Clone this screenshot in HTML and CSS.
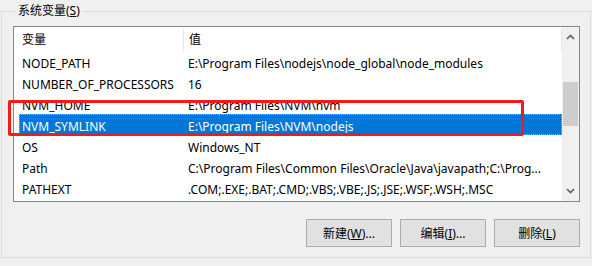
FILE: index.html
```html
<!DOCTYPE html>
<html lang="zh-CN">
<head>
    <meta charset="UTF-8">
    <title>系统变量</title>
    <link rel="stylesheet" href="styles.css">
</head>
<body>
    <fieldset class="group">
        <legend>系统变量(<u>S</u>)</legend>

        <div class="list">
            <div class="list-main">
                <div class="list-head">
                    <div class="head-name">变量</div>
                    <div class="head-value">值</div>
                </div>
                <div class="row"><span class="name">NODE_PATH</span><span class="value">E:\Program Files\nodejs\node_global\node_modules</span></div>
                <div class="row"><span class="name">NUMBER_OF_PROCESSORS</span><span class="value">16</span></div>
                <div class="row"><span class="name">NVM_HOME</span><span class="value">E:\Program Files\NVM\nvm</span></div>
                <div class="row selected"><span class="name">NVM_SYMLINK</span><span class="value">E:\Program Files\NVM\nodejs</span></div>
                <div class="row"><span class="name">OS</span><span class="value">Windows_NT</span></div>
                <div class="row"><span class="name">Path</span><span class="value">C:\Program Files\Common Files\Oracle\Java\javapath;C:\Prog...</span></div>
                <div class="row"><span class="name">PATHEXT</span><span class="value">.COM;.EXE;.BAT;.CMD;.VBS;.VBE;.JS;.JSE;.WSF;.WSH;.MSC</span></div>
            </div>
            <div class="scrollbar">
                <svg class="arrow" width="9" height="6" viewBox="0 0 9 6"><path d="M1 5 L4.5 1.5 L8 5" fill="none" stroke="#606060" stroke-width="1.6"/></svg>
                <div class="track"><div class="thumb"></div></div>
                <svg class="arrow" width="9" height="6" viewBox="0 0 9 6"><path d="M1 1 L4.5 4.5 L8 1" fill="none" stroke="#606060" stroke-width="1.6"/></svg>
            </div>
        </div>

        <div class="buttons">
            <button>新建(<u>W</u>)...</button>
            <button>编辑(<u>I</u>)...</button>
            <button>删除(<u>L</u>)</button>
        </div>

        <!-- annotation box -->
        <div class="mark"></div>
    </fieldset>
</body>
</html>
```

FILE: styles.css
```css
body {
    margin: 0;
    width: 592px;
    height: 266px;
    background-color: #f0f0f0;
    font-family: "Noto Sans", "Noto Sans CJK SC", sans-serif;
    font-size: 12px;
    color: #000;
    overflow: hidden;
}
.group {
    position: relative;
    margin: 4px 1px 0 1px;
    padding: 0 10px 0 11px;
    width: 567px;
    height: 252px;
    border: 1px solid #dcdcdc;
    box-sizing: content-box;
}
.group legend {
    margin-left: 3px;
    padding: 0 2px 0 2px;
    line-height: 14px;
}
.list {
    display: flex;
    margin-top: 8px;
    height: 174px;
    background-color: #fff;
    border: 1px solid #828790;
}
.list-main {
    flex: 1;
}
.list-head {
    display: flex;
    height: 24px;
    box-sizing: border-box;
    padding-top: 2px;
    line-height: 21px;
}
.head-name {
    width: 161px;
    padding-left: 8px;
    border-right: 1px solid #e5e5e5;
}
.head-value {
    flex: 1;
    padding-left: 5px;
    border-right: 1px solid #e5e5e5;
}
.row {
    display: flex;
    height: 21px;
    box-sizing: border-box;
    padding-top: 4px;
    line-height: 17px;
    margin-left: 5px;
    white-space: nowrap;
}
.row .name {
    width: 165px;
    padding-left: 3px;
    box-sizing: border-box;
}
.row .value {
    padding-left: 4px;
}
.row.selected {
    background-color: #0078d7;
    color: #fff;
    outline: 1px dotted #f3a53a;
    outline-offset: -1px;
}
.scrollbar {
    width: 17px;
    display: flex;
    flex-direction: column;
    align-items: center;
    background-color: #f0f0f0;
}
.arrow {
    margin: 7px 0;
}
.track {
    flex: 1;
    width: 100%;
}
.thumb {
    margin: 35px 1px 0 1px;
    height: 44px;
    background-color: #cdcdcd;
}
.buttons {
    display: flex;
    justify-content: flex-end;
    gap: 8px;
    margin-top: 17px;
}
.buttons button {
    width: 86px;
    height: 28px;
    padding: 0;
    background-color: #e1e1e1;
    border: 1px solid #adadad;
    border-radius: 0;
    font-family: inherit;
    font-size: 12px;
    color: #000;
}
.mark {
    position: absolute;
    left: 6px;
    top: 82px;
    width: 510px;
    height: 30px;
    border: 3px solid #f01c1c;
    border-radius: 2px;
}
```
